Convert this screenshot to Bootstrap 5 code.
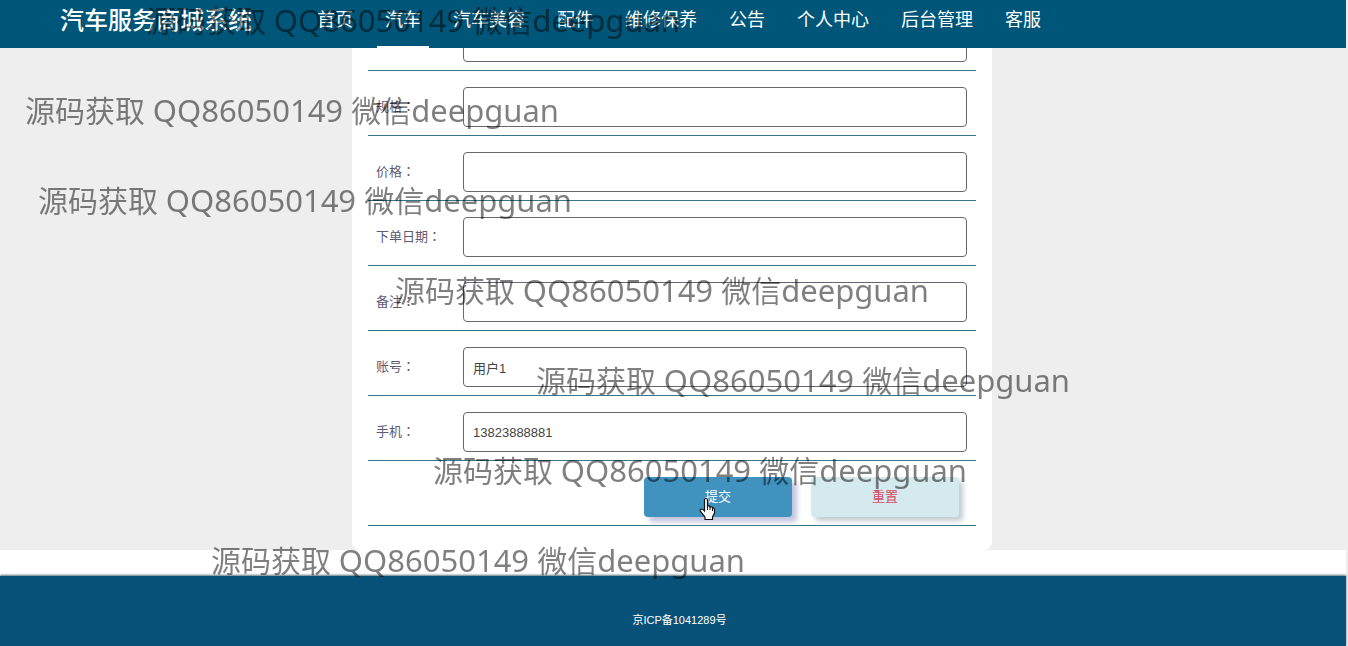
<!DOCTYPE html>
<html lang="zh-CN">
<head>
<meta charset="utf-8">
<meta name="viewport" content="width=device-width, initial-scale=1">
<title>汽车服务商城系统</title>
<link href="https://cdn.jsdelivr.net/npm/bootstrap@5.3.0/dist/css/bootstrap.min.css" rel="stylesheet">
<style>
body{font-family:"Liberation Sans","Noto Sans CJK SC",sans-serif;background:#eee;padding-right:2px;font-size:13px}
.site-head{right:2px;height:48px;background:#005678;padding-left:60px}
.site-title{font-size:24px;font-weight:500;line-height:42px;width:249px;color:#fff;text-decoration:none;white-space:nowrap}
.site-menu{gap:16px}
.site-menu a{height:48px;padding:0 8px;line-height:40px;font-size:18px;color:#fff;border-bottom:2px solid transparent;white-space:nowrap}
.site-menu a.active{border-bottom-color:#fff}
.order-area{padding:6px 2px 0 0}
.order-form{max-width:640px;background:#fff;border-radius:8px;padding:0 16px 24px}
.form-line{padding:16px 9px 8px 8px;border-bottom:1px solid #357786}
.form-line label{width:87px;flex:none;color:#5d5c74;font-family:"Liberation Sans","Noto Sans CJK TC",sans-serif;font-feature-settings:"locl" 0}
.form-line .form-control{height:40px;font-size:13px;padding:0 9px;border:1px solid #686674;border-radius:4px;color:#444;background:#fff}
.form-line .form-wide{width:504px}
.form-actions{gap:19px;padding-right:17px}
.form-actions .btn{width:148px;height:40px;border:0;border-radius:4px;font-size:13px;padding:0}
.btn-send{background:#4093bf;color:#fff;box-shadow:5px 5px 5px #c3c5df}
.btn-send:hover{background:#3585b0;color:#fff}
.btn-clear{background:#d5eaee;color:#d54b62;box-shadow:4px 4px 5px #c3cdcf}
.btn-clear:hover{background:#c5dfe4;color:#d54b62}
.spacer-band{height:26px}
.site-foot{background:#08527a;box-shadow:0 -1px 2px #57707c;padding:35px 0 16px 13px;font-size:11px;line-height:18px;color:#fff}
.stamps{z-index:1100;pointer-events:none;overflow:hidden}
.stamps span{position:absolute;font:30px/42px "Noto Sans","Noto Sans CJK SC",sans-serif;color:rgba(0,0,0,.5);white-space:nowrap}
.stamps b{font-weight:400;font-size:31px;line-height:1}
.s1{left:146px;top:0}.s2{left:25px;top:90px}.s3{left:38px;top:180px}.s4{left:395px;top:270px}.s5{left:536px;top:360px}.s6{left:433px;top:450px}.s7{left:211px;top:540px}
.hand{left:55px;top:20px;z-index:1200}
</style>
</head>
<body class="d-flex flex-column min-vh-100 position-relative">
<header class="site-head fixed-top d-flex">
  <a class="site-title" href="#">汽车服务商城系统</a>
  <nav class="site-menu d-flex" aria-label="主菜单">
    <a class="text-decoration-none" href="#">首页</a>
    <a class="text-decoration-none active" href="#">汽车</a>
    <a class="text-decoration-none" href="#">汽车美容</a>
    <a class="text-decoration-none" href="#">配件</a>
    <a class="text-decoration-none" href="#">维修保养</a>
    <a class="text-decoration-none" href="#">公告</a>
    <a class="text-decoration-none" href="#">个人中心</a>
    <a class="text-decoration-none" href="#">后台管理</a>
    <a class="text-decoration-none" href="#">客服</a>
  </nav>
</header>
<main>
  <div class="order-area">
    <form class="order-form mx-auto">
      <div class="form-line d-flex align-items-center"><input class="form-control form-wide ms-auto" type="text" aria-label="车型"></div>
      <div class="form-line d-flex align-items-center"><label for="spec">规格：</label><input class="form-control" id="spec" type="text"></div>
      <div class="form-line d-flex align-items-center"><label for="price">价格：</label><input class="form-control" id="price" type="text"></div>
      <div class="form-line d-flex align-items-center"><label for="date">下单日期：</label><input class="form-control" id="date" type="text"></div>
      <div class="form-line d-flex align-items-center"><label for="note">备注：</label><input class="form-control" id="note" type="text"></div>
      <div class="form-line d-flex align-items-center"><label for="account">账号：</label><input class="form-control" id="account" type="text" value="用户1"></div>
      <div class="form-line d-flex align-items-center"><label for="phone">手机：</label><input class="form-control" id="phone" type="text" value="13823888881"></div>
      <div class="form-line form-actions d-flex justify-content-end">
        <div class="position-relative">
          <button class="btn btn-send" type="button">提交</button>
          <svg class="hand position-absolute" width="17" height="24" viewBox="0 0 17 24" aria-hidden="true"><path d="M5.500 14V3Q5.500 1.500 7 1.500T8.500 3V9Q11 8.300 11 10Q13.500 9.300 13.500 11Q15.500 10.500 15.500 13V16L13.500 20V22.500H6V20L1.500 14.500Q.5 12.500 2.500 12Q4 12 5.500 14Z" fill="#fff" stroke="#111" stroke-width="1.200"/><path d="M8.500 9v4M11 10v3M13.500 11v3" fill="none" stroke="#111"/></svg>
        </div>
        <button class="btn btn-clear" type="reset">重置</button>
      </div>
    </form>
  </div>
  <div class="spacer-band bg-white"></div>
</main>
<footer class="site-foot flex-grow-1 text-center position-relative">京ICP备1041289号</footer>
<div class="stamps position-absolute top-0 start-0 w-100 h-100">
  <span class="s1">源码获取 <b>QQ86050149 </b>微信<b>deepguan</b></span>
  <span class="s2">源码获取 <b>QQ86050149 </b>微信<b>deepguan</b></span>
  <span class="s3">源码获取 <b>QQ86050149 </b>微信<b>deepguan</b></span>
  <span class="s4">源码获取 <b>QQ86050149 </b>微信<b>deepguan</b></span>
  <span class="s5">源码获取 <b>QQ86050149 </b>微信<b>deepguan</b></span>
  <span class="s6">源码获取 <b>QQ86050149 </b>微信<b>deepguan</b></span>
  <span class="s7">源码获取 <b>QQ86050149 </b>微信<b>deepguan</b></span>
</div>
<script src="https://cdn.jsdelivr.net/npm/bootstrap@5.3.0/dist/js/bootstrap.bundle.min.js"></script>
</body>
</html>
